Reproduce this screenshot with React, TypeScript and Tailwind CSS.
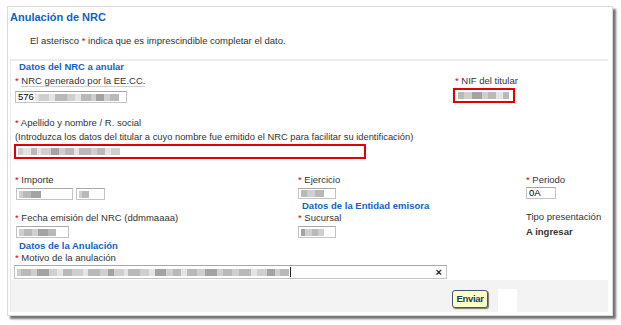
import type { ReactNode } from "react";

// Redacted values in the reference are pixelated smudges: [width, tone]
type Seg = [number, 0 | 1 | 2 | 3];

const TONES = ["bg-[#e4e4e4]", "bg-[#cfcfcf]", "bg-[#b9b9b9]", "bg-[#a3a3a3]"];

const NRC: Seg[] = [[4, 0], [10, 1], [6, 0], [12, 2], [8, 1], [6, 0], [10, 2], [5, 1], [8, 3], [6, 1], [9, 2]];
const NIF: Seg[] = [[6, 2], [8, 1], [10, 3], [6, 1], [8, 2], [7, 0], [6, 2]];
const NAME: Seg[] = [[5, 1], [8, 0], [6, 2], [4, 0], [10, 1], [8, 3], [6, 1], [9, 2], [5, 0], [12, 2], [6, 1], [8, 2], [6, 0], [9, 1]];
const IMP1: Seg[] = [[4, 1], [8, 2], [10, 3]];
const IMP2: Seg[] = [[3, 1], [7, 2]];
const EJER: Seg[] = [[6, 2], [8, 1], [9, 2]];
const FECHA: Seg[] = [[5, 1], [8, 2], [6, 1], [10, 3], [8, 2]];
const SUC: Seg[] = [[4, 3], [7, 1], [6, 2], [6, 1]];
const MOTIVO: Seg[] = [
  [4, 1], [10, 2], [6, 1], [12, 3], [8, 1], [6, 0], [9, 2], [11, 1], [5, 0], [12, 2],
  [8, 1], [6, 3], [10, 1], [4, 0], [12, 2], [9, 1], [6, 0], [11, 3], [7, 1], [8, 2],
  [6, 0], [10, 2], [8, 1], [12, 3], [6, 1], [9, 2], [7, 1], [12, 2], [6, 0], [10, 1],
  [8, 3], [5, 1], [9, 2],
];

function Smudge({ parts }: { parts: Seg[] }) {
  return (
    <span className="flex h-[8px] items-center blur-[0.6px]">
      {parts.map(([w, t], i) => (
        <span key={i} className={`h-[7px] ${TONES[t]}`} style={{ width: w }} />
      ))}
    </span>
  );
}

function Label({ children, req = true }: { children: ReactNode; req?: boolean }) {
  return (
    <div className="h-[12px] whitespace-nowrap text-[9.5px] leading-[12px] text-[#333]">
      {req && <span className="text-[#e00000]">* </span>}
      {children}
    </div>
  );
}

function Heading({ children }: { children: ReactNode }) {
  return (
    <div className="ml-[4px] h-[12px] whitespace-nowrap text-[9.5px] font-bold leading-[12px] text-[#1262c4]">
      {children}
    </div>
  );
}

function Field({ className, children }: { className: string; children?: ReactNode }) {
  return (
    <div
      className={`flex items-center overflow-hidden border border-[#c4c4c4] border-t-[#a8a8a8] bg-white px-[2px] text-[9.5px] text-black ${className}`}
    >
      {children}
    </div>
  );
}

export default function App() {
  return (
    <div className="h-[325px] w-[621px] overflow-hidden bg-white pl-[7px] pt-[6px] font-['Liberation_Sans',Arial,sans-serif]">
      <div className="h-[310px] w-[606px] border border-[#dadada] bg-white shadow-[3px_3px_2px_rgba(0,0,0,0.55)]">
        <div className="h-[52px]">
          <h1 className="pl-[2px] pt-[4px] text-[11px] font-bold leading-[13px] text-[#1262c4]">
            Anulación de NRC
          </h1>
          <p className="mt-[11px] pl-[22px] text-[9.5px] leading-[12px] text-[#333]">
            El asterisco <span className="text-[#e00000]">*</span> indica que es imprescindible completar el dato.
          </p>
        </div>

        <section className="ml-[2px] mr-[4px] border-l border-t-2 border-[#ececec]">
          <div className="pl-[4px]">
            <Heading>Datos del NRC a anular</Heading>

            <div className="mt-[2px] flex">
              <div className="w-[438px]">
                <Label>
                  <span className="border-b border-[#cfcfcf]">NRC generado por la EE.CC.</span>
                </Label>
                <Field className="mt-[4px] h-[12px] w-[112px] gap-[1px]">
                  <span className="leading-none">576</span>
                  <Smudge parts={NRC} />
                </Field>
              </div>
              <div>
                <div className="pl-[2px]">
                  <Label>NIF del titular</Label>
                </div>
                <div className="mt-[1px] flex h-[15px] w-[62px] items-center border-2 border-[#e00000] bg-white px-[3px]">
                  <Smudge parts={NIF} />
                </div>
              </div>
            </div>

            <div className="mt-[14px]">
              <Label>Apellido y nombre / R. social</Label>
              <div className="mt-[2px] h-[12px] whitespace-nowrap text-[9.35px] leading-[12px] text-[#333]">
                (Introduzca los datos del titular a cuyo nombre fue emitido el NRC para facilitar su identificación)
              </div>
              <div className="-ml-[1px] mt-[1px] flex h-[15px] w-[352px] items-center border-2 border-[#e00000] bg-white px-[2px]">
                <Smudge parts={NAME} />
              </div>
            </div>

            <div className="mt-[15px] flex">
              <div className="w-[283px]">
                <Label>Importe</Label>
              </div>
              <div className="w-[228px]">
                <Label>Ejercicio</Label>
              </div>
              <div>
                <Label>Periodo</Label>
              </div>
            </div>
            <div className="mt-[2px] flex h-[12px]">
              <div className="flex w-[283px] gap-[3px] pl-[1px]">
                <Field className="h-[12px] w-[57px]">
                  <Smudge parts={IMP1} />
                </Field>
                <Field className="h-[12px] w-[29px]">
                  <Smudge parts={IMP2} />
                </Field>
              </div>
              <div className="w-[228px]">
                <Field className="h-[11px] w-[38px]">
                  <Smudge parts={EJER} />
                </Field>
              </div>
              <div>
                <Field className="-mt-[1px] h-[12px] w-[30px] leading-none">0A</Field>
              </div>
            </div>

            <div className="flex">
              <div className="w-[283px]" />
              <Heading>Datos de la Entidad emisora</Heading>
            </div>
            <div className="flex">
              <div className="w-[283px]">
                <Label>Fecha emisión del NRC (ddmmaaaa)</Label>
              </div>
              <div className="w-[228px]">
                <Label>Sucursal</Label>
              </div>
              <div className="-mt-[1px]">
                <Label req={false}>Tipo presentación</Label>
              </div>
            </div>
            <div className="mt-[2px] flex h-[12px]">
              <div className="w-[283px] pl-[1px]">
                <Field className="h-[12px] w-[53px]">
                  <Smudge parts={FECHA} />
                </Field>
              </div>
              <div className="w-[228px]">
                <Field className="h-[12px] w-[38px]">
                  <Smudge parts={SUC} />
                </Field>
              </div>
              <div className="text-[9.5px] font-bold leading-[12px] text-[#333]">A ingresar</div>
            </div>

            <div className="mt-[2px]">
              <Heading>Datos de la Anulación</Heading>
            </div>
            <Label>Motivo de la anulación</Label>
            <Field className="-ml-[1px] mt-[1px] h-[14px] w-[433px]">
              <Smudge parts={MOTIVO} />
              <span className="ml-[1px] h-[10px] w-px bg-[#222]" />
              <span className="flex-1" />
              <span className="mr-[2px] text-[11px] font-bold leading-none text-[#222]">×</span>
            </Field>
          </div>

          <div className="mt-[1px] flex h-[32px] items-start bg-[#f3f3f3] pl-[441px]">
            <button className="mt-[10px] h-[18px] w-[36px] rounded-[3px] border border-[#3b5a78] bg-[#ffffc4] text-[9.5px] font-bold leading-none tracking-[-0.3px] text-[#12406a] shadow-[1px_1px_1px_#777]">
              Enviar
            </button>
            <div className="ml-[10px] mt-[9px] h-[23px] w-[19px] bg-white" />
          </div>
        </section>
      </div>
    </div>
  );
}
